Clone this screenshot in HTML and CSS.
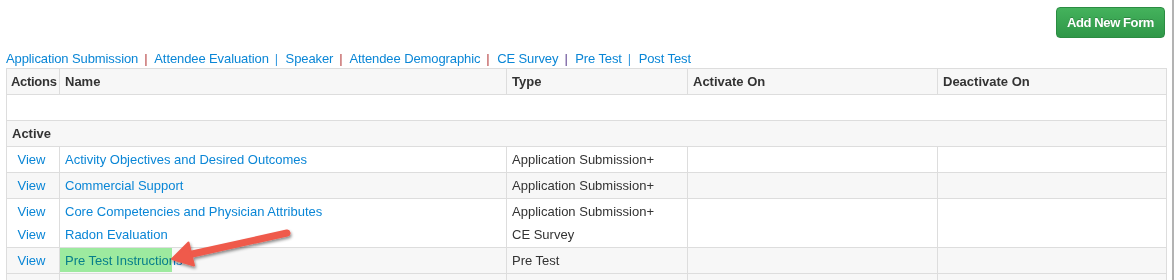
FILE: index.html
```html
<!DOCTYPE html>
<html lang="en">
<head>
  <meta charset="UTF-8">
  <title>Forms</title>
  <link rel="stylesheet" href="styles.css">
</head>
<body>

  <div class="page">
    <div class="toolbar">
      <a class="btn-add" href="#">Add New Form</a>
    </div>

    <div class="tabs">
      <a href="#">Application Submission</a><span class="sep red">|</span>
      <a href="#">Attendee Evaluation</a><span class="sep blue">|</span>
      <a href="#">Speaker</a><span class="sep red">|</span>
      <a href="#">Attendee Demographic</a><span class="sep red">|</span>
      <a href="#">CE Survey</a><span class="sep purple">|</span>
      <a href="#">Pre Test</a><span class="sep blue">|</span>
      <a href="#">Post Test</a>
    </div>

    <table class="forms">
      <colgroup>
        <col class="col-actions">
        <col class="col-name">
        <col class="col-type">
        <col class="col-activate">
        <col>
      </colgroup>
      <thead>
        <tr>
          <th class="action-head">Actions</th>
          <th>Name</th>
          <th>Type</th>
          <th>Activate On</th>
          <th>Deactivate On</th>
        </tr>
      </thead>
      <tbody>
        <tr class="blank"><td colspan="5">&nbsp;</td></tr>
        <tr class="group"><td colspan="5">Active</td></tr>
        <tr>
          <td class="action"><a href="#">View</a></td>
          <td><a href="#">Activity Objectives and Desired Outcomes</a></td>
          <td>Application Submission+</td>
          <td></td>
          <td></td>
        </tr>
        <tr class="alt">
          <td class="action"><a href="#">View</a></td>
          <td><a href="#">Commercial Support</a></td>
          <td>Application Submission+</td>
          <td></td>
          <td></td>
        </tr>
        <tr>
          <td class="action">
            <div class="line"><a href="#">View</a></div>
            <div class="line"><a href="#">View</a></div>
          </td>
          <td>
            <div class="line"><a href="#">Core Competencies and Physician Attributes</a></div>
            <div class="line"><a href="#">Radon Evaluation</a></div>
          </td>
          <td>
            <div class="line">Application Submission+</div>
            <div class="line">CE Survey</div>
          </td>
          <td></td>
          <td></td>
        </tr>
        <tr class="alt">
          <td class="action"><a href="#">View</a></td>
          <td><a href="#">Pre Test Instructions</a></td>
          <td>Pre Test</td>
          <td></td>
          <td></td>
        </tr>
        <tr class="alt">
          <td class="action">&nbsp;</td>
          <td></td>
          <td></td>
          <td></td>
          <td></td>
        </tr>
      </tbody>
    </table>

    <!-- screenshot markup: highlight + arrow -->
    <svg class="annotation" width="1174" height="280" viewBox="0 0 1174 280">
      <defs>
        <filter id="shadow" x="-20%" y="-40%" width="140%" height="180%">
          <feDropShadow dx="1" dy="2" stdDeviation="1.5" flood-color="#000" flood-opacity="0.45"/>
        </filter>
      </defs>
      <rect class="highlight" x="60" y="248" width="112" height="24"/>
      <g filter="url(#shadow)" fill="#ef5a4c" stroke="#ef5a4c">
        <line x1="287" y1="233" x2="190" y2="254.5" stroke-width="7" stroke-linecap="round"/>
        <polygon points="172,259 188.5,242.5 194,265.5" stroke-width="2" stroke-linejoin="round"/>
      </g>
    </svg>
  </div>

</body>
</html>
```

FILE: styles.css
```css
body {
  margin: 0;
  font-family: "Liberation Sans", Arial, sans-serif;
  font-size: 13px;
  line-height: 17px;
  color: #333;
  background: #fff;
  overflow: hidden;
}

a {
  color: #0a86d6;
  text-decoration: none;
}

.page {
  position: relative;
  width: 1174px;
  min-height: 280px;
  box-sizing: border-box;
  padding: 7px 5px 0 6px;
  border-right: 2px solid #b3b3b3;
}

.toolbar {
  display: flex;
  justify-content: flex-end;
}

.btn-add {
  display: block;
  width: 109px;
  height: 31px;
  margin-right: 2px;
  box-sizing: border-box;
  border: 1px solid #2b8c42;
  border-radius: 4px;
  background: linear-gradient(to bottom, #44b25c, #2f9748);
  color: #fff;
  font-weight: bold;
  font-size: 13px;
  letter-spacing: -0.4px;
  line-height: 29px;
  text-align: center;
  text-shadow: 0 -1px 0 rgba(0, 0, 0, 0.2);
}

.tabs {
  margin-top: 12px;
  margin-bottom: 1px;
  white-space: nowrap;
  letter-spacing: -0.1px;
}

.sep {
  padding: 0 4px 0 6px;
}

.sep.red { color: #b53c3c; }
.sep.blue { color: #3a9ce0; }
.sep.purple { color: #5b3f8e; }

.forms {
  width: 1161px;
  table-layout: fixed;
  border-collapse: collapse;
  border: 1px solid #ddd;
}

.col-actions { width: 53px; }
.col-name { width: 447px; }
.col-type { width: 181px; }
.col-activate { width: 250px; }

.forms th,
.forms td {
  padding: 4px 5px;
  border: 1px solid #ddd;
  text-align: left;
  vertical-align: top;
  line-height: 17px;
}

.forms th {
  background: #f7f7f7;
  font-weight: bold;
}

.forms th.action-head {
  padding-left: 4px;
  padding-right: 2px;
  letter-spacing: -0.3px;
}

.forms td.action {
  text-align: center;
  padding-right: 8px;
}

.forms .line + .line {
  margin-top: 6px;
}

.forms tr.group td {
  background: #f7f7f7;
  font-weight: bold;
}

.forms tr.alt td {
  background: #f7f7f7;
}

.annotation {
  position: absolute;
  left: 0;
  top: 0;
  pointer-events: none;
}

.highlight {
  fill: #a2f2a4;
  mix-blend-mode: multiply;
}
```
